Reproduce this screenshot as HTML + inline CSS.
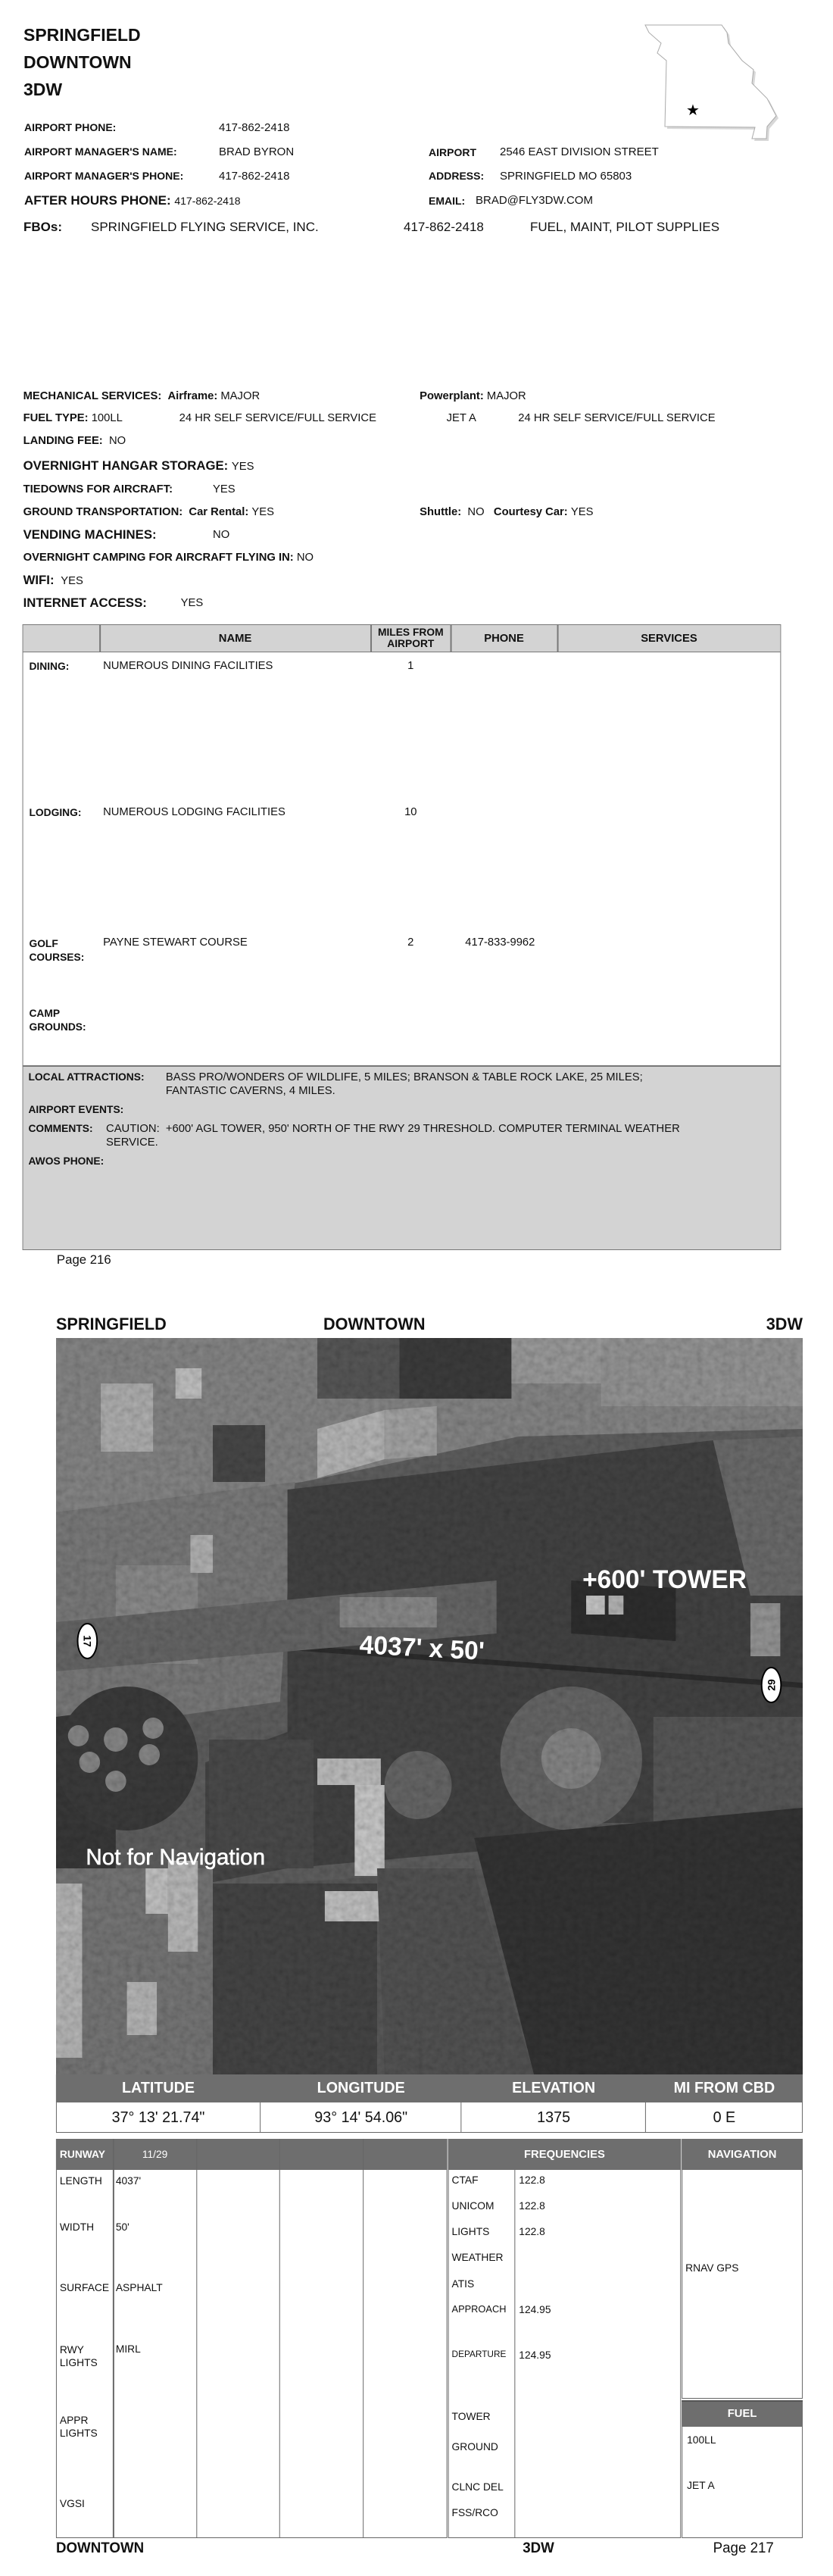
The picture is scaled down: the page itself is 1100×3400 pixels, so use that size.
<!DOCTYPE html>
<html><head><meta charset="utf-8">
<style>
*{margin:0;padding:0;box-sizing:border-box}
body{width:1100px;height:3400px;background:#fff;position:relative;font-family:"Liberation Sans",Arial,sans-serif;color:#111;overflow:hidden}
.t{position:absolute;white-space:nowrap;line-height:1}
.b{font-weight:bold}
.s14{font-size:14px}.s15{font-size:15px}.s17{font-size:17px}
.box{position:absolute}
.w{color:#fff}
#lower{position:absolute;left:0;top:0;width:1100px;height:3400px;transform:scaleX(0.986);transform-origin:0 0}
</style></head><body>

<!-- PAGE 1 -->
<div class="t b" style="left:31px;top:35px;font-size:23px">SPRINGFIELD</div>
<div class="t b" style="left:31px;top:71px;font-size:23px">DOWNTOWN</div>
<div class="t b" style="left:31px;top:107px;font-size:23px">3DW</div>

<svg class="box" style="left:840px;top:20px" width="220" height="180" viewBox="840 20 220 180">
<path d="M855,36 L956,36 L963,46 L965,60 L983,83 L998,95 L996,113 L1016,133 L1028,156 L1016,170 L1015,186 L996,186 L1000,171 L881,170 L883,83 L871,73 L876,60 L860,46 Z" fill="#d8d8d8"/>
<path d="M852,33 L953,33 L960,43 L962,57 L980,80 L995,92 L993,110 L1013,130 L1025,153 L1013,167 L1012,183 L993,183 L997,168 L878,167 L880,80 L868,70 L873,57 L857,43 Z" fill="#fff" stroke="#aaa" stroke-width="1"/>
<text x="915" y="152" font-size="20" text-anchor="middle" fill="#000" font-family="DejaVu Sans">★</text>
</svg>

<div class="t b s14" style="left:32px;top:161px">AIRPORT PHONE:</div>
<div class="t s15" style="left:289px;top:161px">417-862-2418</div>
<div class="t b s14" style="left:32px;top:193px">AIRPORT MANAGER'S NAME:</div>
<div class="t s15" style="left:289px;top:193px">BRAD BYRON</div>
<div class="t b s14" style="left:32px;top:225px">AIRPORT MANAGER'S PHONE:</div>
<div class="t s15" style="left:289px;top:225px">417-862-2418</div>
<div class="t b s17" style="left:32px;top:256px">AFTER HOURS PHONE: <span style="font-weight:normal;font-size:14px">417-862-2418</span></div>
<div class="t b s14" style="left:566px;top:194px">AIRPORT</div>
<div class="t s15" style="left:660px;top:193px">2546 EAST DIVISION STREET</div>
<div class="t b s14" style="left:566px;top:225px">ADDRESS:</div>
<div class="t s15" style="left:660px;top:225px">SPRINGFIELD MO 65803</div>
<div class="t b s14" style="left:566px;top:258px">EMAIL:</div>
<div class="t s15" style="left:628px;top:257px">BRAD@FLY3DW.COM</div>
<div class="t b s17" style="left:31px;top:291px">FBOs:</div>
<div class="t s17" style="left:120px;top:291px">SPRINGFIELD FLYING SERVICE, INC.</div>
<div class="t s17" style="left:533px;top:291px">417-862-2418</div>
<div class="t s17" style="left:700px;top:291px">FUEL, MAINT, PILOT SUPPLIES</div>

<div id="lower">
<div class="t b s15" style="left:31px;top:515px">MECHANICAL SERVICES: &nbsp;Airframe: <span style="font-weight:normal">MAJOR</span></div>
<div class="t b s15" style="left:562px;top:515px">Powerplant: <span style="font-weight:normal">MAJOR</span></div>
<div class="t b s15" style="left:31px;top:544px">FUEL TYPE: <span style="font-weight:normal">100LL</span></div>
<div class="t s15" style="left:240px;top:544px">24 HR SELF SERVICE/FULL SERVICE</div>
<div class="t s15" style="left:598px;top:544px">JET A</div>
<div class="t s15" style="left:694px;top:544px">24 HR SELF SERVICE/FULL SERVICE</div>
<div class="t b s15" style="left:31px;top:574px">LANDING FEE: <span style="font-weight:normal">&nbsp;NO</span></div>
<div class="t b s17" style="left:31px;top:606px">OVERNIGHT HANGAR STORAGE: <span style="font-weight:normal;font-size:15px">YES</span></div>
<div class="t b s15" style="left:31px;top:638px">TIEDOWNS FOR AIRCRAFT:</div>
<div class="t s15" style="left:285px;top:638px">YES</div>
<div class="t b s15" style="left:31px;top:668px">GROUND TRANSPORTATION: &nbsp;Car Rental: <span style="font-weight:normal">YES</span></div>
<div class="t b s15" style="left:562px;top:668px">Shuttle: <span style="font-weight:normal">&nbsp;NO</span> &nbsp; Courtesy Car: <span style="font-weight:normal">YES</span></div>
<div class="t b s17" style="left:31px;top:697px">VENDING MACHINES:</div>
<div class="t s15" style="left:285px;top:698px">NO</div>
<div class="t b s15" style="left:31px;top:728px">OVERNIGHT CAMPING FOR AIRCRAFT FLYING IN: <span style="font-weight:normal">NO</span></div>
<div class="t b s17" style="left:31px;top:757px">WIFI: <span style="font-weight:normal;font-size:15px">&nbsp;YES</span></div>
<div class="t b s17" style="left:31px;top:787px">INTERNET ACCESS:</div>
<div class="t s15" style="left:242px;top:788px">YES</div>

<div class="box" style="left:30px;top:824px;width:1016px;height:826px;border:1.5px solid #777"></div>
<div class="box" style="left:31px;top:825px;width:1014px;height:36px;background:#d3d3d3;border-bottom:1.5px solid #777"></div>
<div class="box" style="left:133px;top:825px;width:1.5px;height:36px;background:#777"></div>
<div class="box" style="left:496px;top:825px;width:1.5px;height:36px;background:#777"></div>
<div class="box" style="left:603px;top:825px;width:1.5px;height:36px;background:#777"></div>
<div class="box" style="left:746px;top:825px;width:1.5px;height:36px;background:#777"></div>
<div class="t b s15" style="left:134px;width:362px;text-align:center;top:835px">NAME</div>
<div class="t b" style="left:497px;width:106px;text-align:center;top:827px;font-size:14px;line-height:15px">MILES FROM<br>AIRPORT</div>
<div class="t b s15" style="left:604px;width:142px;text-align:center;top:835px">PHONE</div>
<div class="t b s15" style="left:747px;width:298px;text-align:center;top:835px">SERVICES</div>

<div class="t b s14" style="left:39px;top:872px">DINING:</div>
<div class="t s15" style="left:138px;top:871px">NUMEROUS DINING FACILITIES</div>
<div class="t s15" style="left:500px;width:100px;text-align:center;top:871px">1</div>
<div class="t b s14" style="left:39px;top:1065px">LODGING:</div>
<div class="t s15" style="left:138px;top:1064px">NUMEROUS LODGING FACILITIES</div>
<div class="t s15" style="left:500px;width:100px;text-align:center;top:1064px">10</div>
<div class="t b s14" style="left:39px;top:1236px;line-height:18px">GOLF<br>COURSES:</div>
<div class="t s15" style="left:138px;top:1236px">PAYNE STEWART COURSE</div>
<div class="t s15" style="left:500px;width:100px;text-align:center;top:1236px">2</div>
<div class="t s15" style="left:623px;top:1236px">417-833-9962</div>
<div class="t b s14" style="left:39px;top:1328px;line-height:18px">CAMP<br>GROUNDS:</div>

<div class="box" style="left:31px;top:1406px;width:1014px;height:243px;background:#d3d3d3;border-top:2px solid #777"></div>
<div class="t b s14" style="left:38px;top:1414px">LOCAL ATTRACTIONS:</div>
<div class="t s15" style="left:222px;top:1413px;line-height:18px">BASS PRO/WONDERS OF WILDLIFE, 5 MILES; BRANSON &amp; TABLE ROCK LAKE, 25 MILES;<br>FANTASTIC CAVERNS, 4 MILES.</div>
<div class="t b s14" style="left:38px;top:1457px">AIRPORT EVENTS:</div>
<div class="t b s14" style="left:38px;top:1482px">COMMENTS:</div>
<div class="t s15" style="left:142px;top:1481px;line-height:18px">CAUTION: &nbsp;+600' AGL TOWER, 950' NORTH OF THE RWY 29 THRESHOLD. COMPUTER TERMINAL WEATHER<br>SERVICE.</div>
<div class="t b s14" style="left:38px;top:1525px">AWOS PHONE:</div>

<div class="t" style="left:76px;top:1654px;font-size:17px">Page 216</div>

<!-- PAGE 2 -->
<div class="t b" style="left:75px;top:1737px;font-size:22px">SPRINGFIELD</div>
<div class="t b" style="left:433px;top:1737px;font-size:22px">DOWNTOWN</div>
<div class="t b" style="right:25px;top:1737px;font-size:22px">3DW</div>

<svg class="box" style="left:75px;top:1766px" width="1000" height="972" viewBox="0 0 1000 972">
<defs>
<filter id="n" x="0" y="0" width="100%" height="100%">
<feTurbulence type="fractalNoise" baseFrequency="0.12" numOctaves="2" seed="3"/>
<feColorMatrix type="saturate" values="0"/>
<feComponentTransfer><feFuncA type="linear" slope="0" intercept="0.5"/></feComponentTransfer>
</filter>
</defs>
<rect width="1000" height="972" fill="#626262"/>
<polygon points="0,0 1000,0 1000,120 620,130 330,190 0,230" fill="#8a8a8a"/>
<polygon points="0,230 320,190 300,480 0,520" fill="#7e7e7e"/>
<rect x="60" y="60" width="70" height="90" fill="#b5b5b5"/>
<rect x="160" y="40" width="35" height="40" fill="#c8c8c8"/>
<polygon points="350,120 440,95 440,160 350,185" fill="#bdbdbd"/>
<polygon points="440,95 510,90 510,155 440,160" fill="#a9a9a9"/>
<rect x="460" y="0" width="150" height="80" fill="#3e3e3e"/>
<rect x="350" y="0" width="110" height="80" fill="#5a5a5a"/>
<rect x="610" y="0" width="120" height="60" fill="#a0a0a0"/>
<rect x="730" y="0" width="270" height="90" fill="#9a9a9a"/>
<rect x="210" y="115" width="70" height="75" fill="#4a4a4a"/>
<rect x="80" y="300" width="110" height="130" fill="#8f8f8f"/>
<rect x="180" y="260" width="30" height="50" fill="#b8b8b8"/>
<polygon points="310,200 880,135 1000,140 1000,640 880,650 310,700" fill="#454545"/>
<polygon points="880,135 1000,130 1000,340 930,340" fill="#6f6f6f"/>
<polygon points="0,500 80,490 80,700 0,710" fill="#3a3a3a"/>
<polygon points="200,560 310,520 310,700 200,720" fill="#484848"/>
<polygon points="0,740 590,700 700,640 1000,640 1000,972 0,972" fill="#5c5c5c"/>
<polygon points="0,382 1000,455 1000,462 0,389" fill="#2e2e2e"/>
<polygon points="0,375 260,350 590,320 590,390 0,440" fill="#6a6a6a"/>
<polygon points="690,320 830,330 830,400 690,390" fill="#2f2f2f"/>
<rect x="710" y="340" width="25" height="25" fill="#cfcfcf"/>
<rect x="740" y="340" width="20" height="25" fill="#bbb"/>
<rect x="930" y="350" width="40" height="70" fill="#9a9a9a"/>
<rect x="380" y="342" width="130" height="40" fill="#8e8e8e"/>
<circle cx="95" cy="555" r="95" fill="#3d3d3d"/>
<circle cx="80" cy="530" r="16" fill="#8c8c8c"/><circle cx="45" cy="560" r="14" fill="#8c8c8c"/><circle cx="125" cy="550" r="14" fill="#8c8c8c"/><circle cx="80" cy="585" r="14" fill="#8c8c8c"/><circle cx="130" cy="515" r="14" fill="#8c8c8c"/><circle cx="30" cy="525" r="14" fill="#8c8c8c"/>
<rect x="205" y="530" width="140" height="170" fill="#4d4d4d"/>
<rect x="350" y="555" width="85" height="35" fill="#c4c4c4"/>
<rect x="400" y="590" width="40" height="120" fill="#cfcfcf"/>
<circle cx="485" cy="590" r="45" fill="#6a6a6a"/>
<circle cx="690" cy="555" r="95" fill="#6a6a6a"/>
<circle cx="690" cy="555" r="40" fill="#8a8a8a"/>
<rect x="800" y="500" width="200" height="160" fill="#5a5a5a"/>
<rect x="0" y="700" width="210" height="272" fill="#7a7a7a"/>
<rect x="0" y="720" width="35" height="230" fill="#bdbdbd"/>
<rect x="120" y="700" width="30" height="60" fill="#c9c9c9"/>
<rect x="150" y="690" width="40" height="120" fill="#c0c0c0"/>
<rect x="95" y="850" width="40" height="70" fill="#bdbdbd"/>
<rect x="210" y="720" width="220" height="252" fill="#474747"/>
<rect x="360" y="730" width="80" height="40" fill="#c8c8c8"/>
<polygon points="430,700 560,700 640,972 440,972" fill="#555"/>
<polygon points="560,660 1000,620 1000,972 640,972" fill="#353535"/>
<rect width="1000" height="972" filter="url(#n)" style="mix-blend-mode:multiply" opacity="0.85"/>
<g font-family="Liberation Sans,Arial,sans-serif" font-weight="bold" fill="#fff">
<text x="705" y="330" font-size="34">+600' TOWER</text>
<text x="406" y="416" font-size="34" transform="rotate(3 406 416)">4037' x 50'</text>
<text x="40" y="695" font-size="30" font-weight="normal" stroke="#fff" stroke-width="0.6">Not for Navigation</text>
</g>
<ellipse cx="42" cy="400" rx="13" ry="23" fill="#fff" stroke="#000" stroke-width="2"/>
<text x="42" y="400" font-size="14" font-weight="bold" font-family="Liberation Sans,Arial,sans-serif" text-anchor="middle" transform="rotate(90 42 400)" dy="5">17</text>
<ellipse cx="958" cy="458" rx="13" ry="23" fill="#fff" stroke="#000" stroke-width="2"/>
<text x="958" y="458" font-size="14" font-weight="bold" font-family="Liberation Sans,Arial,sans-serif" text-anchor="middle" transform="rotate(-90 958 458)" dy="5">29</text>
</svg>

<div class="box" style="left:75px;top:2738px;width:1000px;height:77px;border:1.5px solid #666;background:#fff"></div>
<div class="box" style="left:75px;top:2738px;width:1000px;height:37px;background:#6e6e6e"></div>
<div class="t b w" style="left:75px;width:274px;text-align:center;top:2746px;font-size:20px">LATITUDE</div>
<div class="t b w" style="left:349px;width:269px;text-align:center;top:2746px;font-size:20px">LONGITUDE</div>
<div class="t b w" style="left:618px;width:247px;text-align:center;top:2746px;font-size:20px">ELEVATION</div>
<div class="t b w" style="left:865px;width:210px;text-align:center;top:2746px;font-size:20px">MI FROM CBD</div>
<div class="box" style="left:348px;top:2775px;width:1px;height:40px;background:#666"></div>
<div class="box" style="left:617px;top:2775px;width:1px;height:40px;background:#666"></div>
<div class="box" style="left:864px;top:2775px;width:1px;height:40px;background:#666"></div>
<div class="t" style="left:75px;width:274px;text-align:center;top:2785px;font-size:20px">37° 13' 21.74"</div>
<div class="t" style="left:349px;width:269px;text-align:center;top:2785px;font-size:20px">93° 14' 54.06"</div>
<div class="t" style="left:618px;width:247px;text-align:center;top:2785px;font-size:20px">1375</div>
<div class="t" style="left:865px;width:210px;text-align:center;top:2785px;font-size:20px">0 E</div>

<div class="box" style="left:75px;top:2823px;width:524px;height:527px;border:1.5px solid #666"></div>
<div class="box" style="left:75px;top:2823px;width:524px;height:41px;background:#6e6e6e"></div>
<div class="box" style="left:151px;top:2823px;width:1.5px;height:527px;background:#666"></div>
<div class="box" style="left:263px;top:2823px;width:1px;height:527px;background:#666"></div>
<div class="box" style="left:374px;top:2823px;width:1px;height:527px;background:#666"></div>
<div class="box" style="left:486px;top:2823px;width:1px;height:527px;background:#666"></div>
<div class="t b w s14" style="left:80px;top:2836px">RUNWAY</div>
<div class="t w s14" style="left:152px;width:111px;text-align:center;top:2836px">11/29</div>
<div class="t s14" style="left:80px;top:2871px">LENGTH</div>
<div class="t s14" style="left:155px;top:2871px">4037'</div>
<div class="t s14" style="left:80px;top:2932px">WIDTH</div>
<div class="t s14" style="left:155px;top:2932px">50'</div>
<div class="t s14" style="left:80px;top:3012px">SURFACE</div>
<div class="t s14" style="left:155px;top:3012px">ASPHALT</div>
<div class="t s14" style="left:80px;top:3093px;line-height:17px">RWY<br>LIGHTS</div>
<div class="t s14" style="left:155px;top:3093px">MIRL</div>
<div class="t s14" style="left:80px;top:3186px;line-height:17px">APPR<br>LIGHTS</div>
<div class="t s14" style="left:80px;top:3297px">VGSI</div>

<div class="box" style="left:600px;top:2823px;width:312px;height:527px;border:1.5px solid #666"></div>
<div class="box" style="left:600px;top:2823px;width:312px;height:41px;background:#6e6e6e"></div>
<div class="box" style="left:689px;top:2864px;width:1px;height:486px;background:#666"></div>
<div class="t b w" style="left:600px;width:312px;text-align:center;top:2836px;font-size:15px">FREQUENCIES</div>
<div class="t s14" style="left:605px;top:2870px">CTAF</div><div class="t s14" style="left:695px;top:2870px">122.8</div>
<div class="t s14" style="left:605px;top:2904px">UNICOM</div><div class="t s14" style="left:695px;top:2904px">122.8</div>
<div class="t s14" style="left:605px;top:2938px">LIGHTS</div><div class="t s14" style="left:695px;top:2938px">122.8</div>
<div class="t s14" style="left:605px;top:2972px">WEATHER</div>
<div class="t s14" style="left:605px;top:3007px">ATIS</div>
<div class="t" style="left:605px;top:3041px;font-size:13px">APPROACH</div><div class="t s14" style="left:695px;top:3041px">124.95</div>
<div class="t" style="left:605px;top:3101px;font-size:12px">DEPARTURE</div><div class="t s14" style="left:695px;top:3101px">124.95</div>
<div class="t s14" style="left:605px;top:3182px">TOWER</div>
<div class="t s14" style="left:605px;top:3222px">GROUND</div>
<div class="t s14" style="left:605px;top:3275px">CLNC DEL</div>
<div class="t s14" style="left:605px;top:3309px">FSS/RCO</div>

<div class="box" style="left:913px;top:2823px;width:162px;height:343px;border:1.5px solid #666"></div>
<div class="box" style="left:913px;top:2823px;width:162px;height:41px;background:#6e6e6e"></div>
<div class="t b w" style="left:913px;width:162px;text-align:center;top:2836px;font-size:15px">NAVIGATION</div>
<div class="t s14" style="left:918px;top:2986px">RNAV GPS</div>
<div class="box" style="left:913px;top:3168px;width:162px;height:182px;border:1.5px solid #666"></div>
<div class="box" style="left:913px;top:3168px;width:162px;height:35px;background:#6e6e6e;border-top:2px solid #555"></div>
<div class="t b w" style="left:913px;width:162px;text-align:center;top:3178px;font-size:15px">FUEL</div>
<div class="t s14" style="left:920px;top:3213px">100LL</div>
<div class="t s14" style="left:920px;top:3273px">JET A</div>

<div class="t b" style="left:75px;top:3354px;font-size:19px">DOWNTOWN</div>
<div class="t b" style="left:700px;top:3354px;font-size:19px">3DW</div>
<div class="t" style="left:955px;top:3354px;font-size:19px">Page 217</div>
</div>
</body></html>
